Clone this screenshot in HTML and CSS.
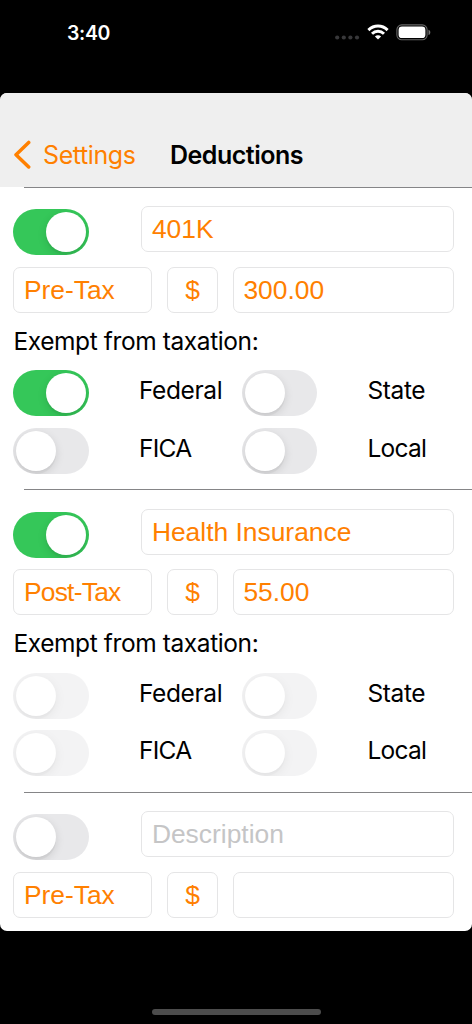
FILE: index.html
```html
<!DOCTYPE html>
<html lang="en">
<head>
<meta charset="utf-8">
<title>Deductions</title>
<link rel="stylesheet" href="styles.css">
</head>
<body>
<div class="statusbar">
  <span class="time">3:40</span>
  <div class="indicators">
    <svg class="cellular" width="25" height="5" viewBox="0 0 25 5" fill="#38383a"><circle cx="2.2" cy="2.5" r="2.1"/><circle cx="8.8" cy="2.5" r="2.1"/><circle cx="15.4" cy="2.5" r="2.1"/><circle cx="22" cy="2.5" r="2.1"/></svg>
    <svg class="wifi" width="22" height="16" viewBox="0 0 22 16" fill="none" stroke="#fff" stroke-width="2.9"><path d="M1.4 6.1C6.8.7 15.2.7 20.6 6.1"/><path d="M5 9.8c3.4-3.4 8.6-3.4 12 0"/><path d="M11 15.6 7.9 12.4c1.8-1.6 4.4-1.6 6.2 0z" fill="#fff" stroke="none"/></svg>
    <svg class="battery" width="36" height="17" viewBox="0 0 36 17"><rect x=".9" y=".9" width="30.2" height="14.9" rx="4.8" fill="none" stroke="#666" stroke-width="1.1"/><rect x="2.6" y="2.6" width="26.8" height="11.5" rx="3.4" fill="#fff"/><path d="M32.5 5.7c2.4.8 2.4 4.6 0 5.4z" fill="#777"/></svg>
  </div>
</div>
<main class="sheet">
  <header class="navbar">
    <svg class="back-icon" width="18" height="30" viewBox="0 0 18 30" fill="none" stroke="#ff8000" stroke-width="3.5" stroke-linecap="round" stroke-linejoin="round"><path d="M15.7 2.4 3 14.7l12.7 12.3"/></svg>
    <span class="back">Settings</span>
    <h1 class="title">Deductions</h1>
  </header>

  <section class="deduction">
    <div class="row name-row"><span class="switch on"></span><div class="field name">401K</div></div>
    <div class="row"><div class="field kind">Pre-Tax</div><div class="field unit">$</div><div class="field amount">300.00</div></div>
    <p class="caption"><span>Exempt from taxation:</span></p>
    <div class="exemptions">
      <span class="switch on"></span><span class="label">Federal</span><span class="switch"></span><span class="label">State</span>
      <span class="switch"></span><span class="label tight">FICA</span><span class="switch"></span><span class="label tight">Local</span>
    </div>
  </section>

  <section class="deduction">
    <div class="row name-row"><span class="switch on"></span><div class="field name">Health Insurance</div></div>
    <div class="row"><div class="field kind post">Post-Tax</div><div class="field unit">$</div><div class="field amount">55.00</div></div>
    <p class="caption"><span>Exempt from taxation:</span></p>
    <div class="exemptions">
      <span class="switch disabled"></span><span class="label">Federal</span><span class="switch disabled"></span><span class="label">State</span>
      <span class="switch disabled"></span><span class="label tight">FICA</span><span class="switch disabled"></span><span class="label tight">Local</span>
    </div>
  </section>

  <section class="deduction">
    <div class="row name-row"><span class="switch"></span><div class="field name placeholder">Description</div></div>
    <div class="row"><div class="field kind">Pre-Tax</div><div class="field unit">$</div><div class="field amount"></div></div>
  </section>
</main>
<footer class="home"><div class="home-indicator"></div></footer>
</body>
</html>
```

FILE: styles.css
```css
* { box-sizing: border-box; }
body {
  margin: 0;
  width: 472px;
  height: 1024px;
  overflow: hidden;
  background: #000;
  color: #000;
  font-family: Inter, "Liberation Sans", sans-serif;
}
.statusbar {
  height: 93px;
  display: flex;
  justify-content: space-between;
  align-items: flex-start;
  padding: 21px 40.5px 0 67px;
  color: #fff;
}
.time {
  font-size: 19.5px;
  font-weight: 600;
  line-height: 24px;
  letter-spacing: -0.35px;
}
.indicators { display: flex; align-items: flex-start; padding-top: 3px; }
.cellular { margin: 11px 7px 0 0; }
.wifi { margin-right: 7px; }

.sheet {
  height: 838px;
  overflow: hidden;
  border-radius: 7px;
  background: #fff;
}
.navbar {
  height: 94.2px;
  display: flex;
  align-items: flex-start;
  padding: 47px 0 0 13px;
  background: #efefef;
}
.back {
  width: 127px;
  margin-left: 12px;
  font-size: 25px;
  line-height: 30px;
  color: #ff8000;
  letter-spacing: -0.4px;
}
.title {
  margin: 0;
  font-size: 25px;
  font-weight: 600;
  line-height: 30px;
  letter-spacing: -0.5px;
}
.deduction {
  height: 302.2px;
  padding: 19.2px 18px 0 13.4px;
  background: linear-gradient(#858587, #858587) 24px 0 / 448px 1px no-repeat;
}
.row { display: flex; height: 46px; gap: 15px; }
.name-row { gap: 52.6px; margin-bottom: 14.8px; }
.name-row .switch { margin-top: 3px; }
.field {
  height: 46px;
  border: 1px solid #e5e5e6;
  border-radius: 7px;
  padding-left: 9.5px;
  font: 26.4px/45px "Liberation Sans", Arial, sans-serif;
  color: #ff8000;
  white-space: nowrap;
}
.name { flex: 1; }
.kind { width: 138.6px; }
.post { letter-spacing: -0.75px; }
.unit { width: 51.4px; padding: 0; text-align: center; }
.amount { flex: 1; padding-left: 9px; }
.placeholder { color: #c5c5c6; }
.switch {
  flex: none;
  display: block;
  width: 75.4px;
  height: 46px;
  padding: 3px;
  border-radius: 23px;
  background: #e8e8ea;
  overflow: hidden;
}
.switch::before {
  content: "";
  display: block;
  width: 40px;
  height: 40px;
  border-radius: 50%;
  background: #fff;
  box-shadow: 0 3px 10px rgba(0, 0, 0, .12), 0 3px 1px rgba(0, 0, 0, .04);
}
.switch.on { background: #35c759; }
.switch.on::before { margin-left: auto; }
.switch.disabled { opacity: .5; }
.caption {
  height: 57.2px;
  margin: 0;
  padding-top: 12.6px;
  font-size: 24.5px;
  line-height: 30px;
  letter-spacing: -0.4px;
}
.exemptions {
  display: grid;
  grid-template-columns: 125.6px 103px 125.5px 1fr;
  grid-auto-rows: 46px;
  row-gap: 11.7px;
}
.label {
  font-size: 24.5px;
  line-height: 41.4px;
  letter-spacing: -0.4px;
}
.tight { letter-spacing: -0.75px; }
.home { padding-top: 78px; }
.home-indicator {
  width: 169px;
  height: 6px;
  margin: 0 auto;
  border-radius: 3px;
  background: #4c4c4c;
}
```
